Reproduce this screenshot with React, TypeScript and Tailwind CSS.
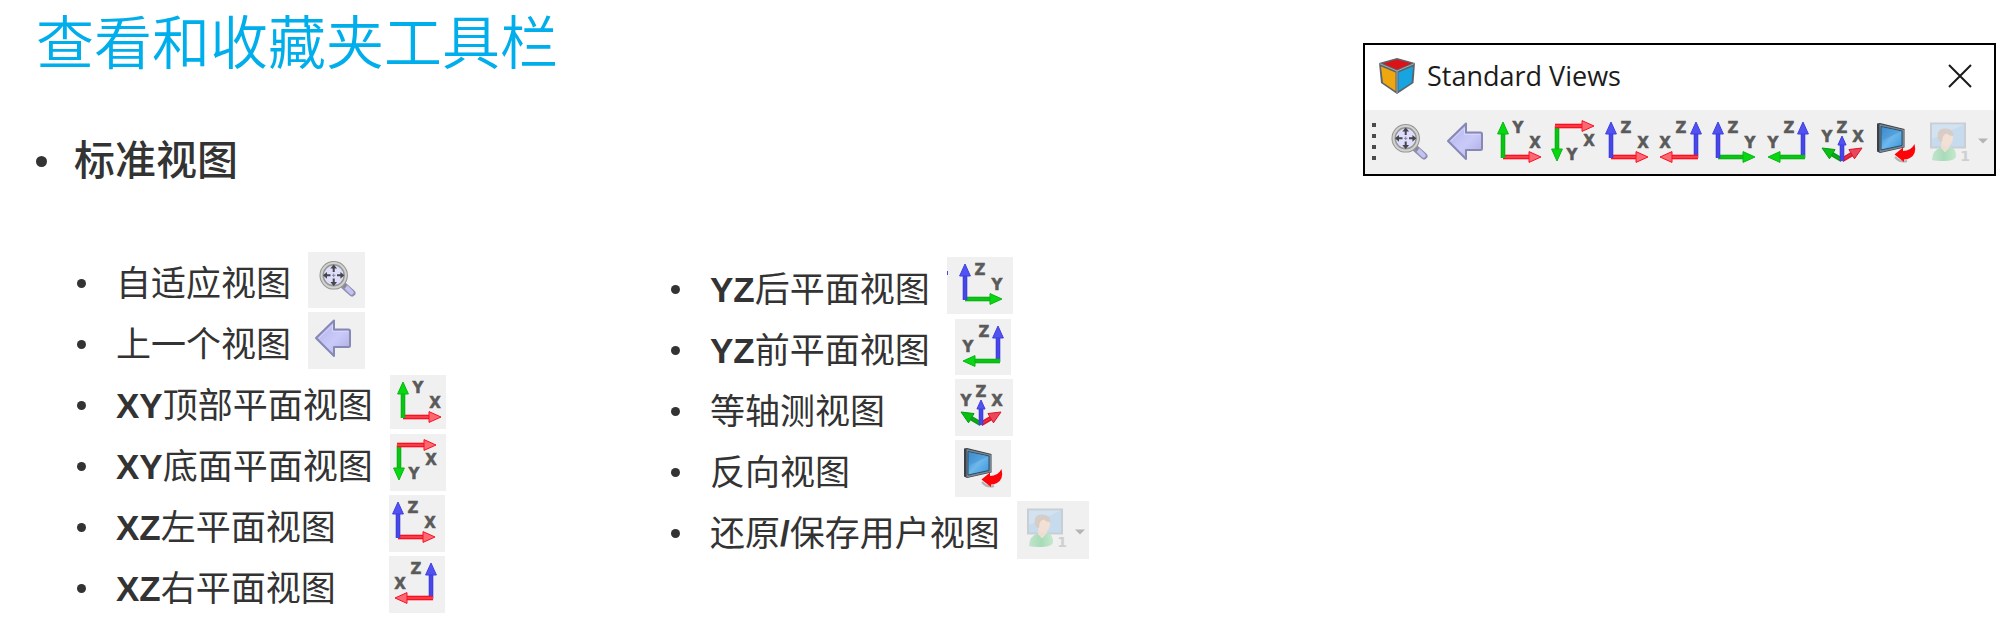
import type { ReactNode } from "react";

const RED = "#fb1020";
const RED_TIP = "#fb6a74";
const GREEN = "#0ab515";
const GREEN_TIP = "#08d810";
const BLUE = "#3f3fe0";
const BLUE_TIP = "#5252f0";

type ArrowProps = { x1: number; y1: number; x2: number; y2: number; color: string; tip: string; head?: number };

function Arrow({ x1, y1, x2, y2, color, tip, head = 12 }: ArrowProps) {
  const length = Math.hypot(x2 - x1, y2 - y1);
  const ux = (x2 - x1) / length;
  const uy = (y2 - y1) / length;
  const bx = x2 - ux * head;
  const by = y2 - uy * head;
  const half = head * 0.45;
  return (
    <g>
      <line x1={x1} y1={y1} x2={bx + ux} y2={by + uy} stroke={color} strokeWidth={4.6} />
      <line x1={x1} y1={y1} x2={bx} y2={by} stroke={tip} strokeWidth={1.4} opacity={0.7} />
      <polygon
        points={`${x2},${y2} ${bx - uy * half},${by + ux * half} ${bx + uy * half},${by - ux * half}`}
        fill={tip}
        stroke={color}
        strokeWidth={1}
        strokeLinejoin="round"
      />
    </g>
  );
}

function Letter({ x, y, children }: { x: number; y: number; children: string }) {
  return (
    <text
      x={x}
      y={y}
      textAnchor="middle"
      fontFamily="DejaVu Sans, sans-serif"
      fontWeight={700}
      fontSize={15}
      fill="#5a5a5a"
      stroke="#5a5a5a"
      strokeWidth={0.5}
    >
      {children}
    </text>
  );
}

function Icon({ children }: { children: ReactNode }) {
  return (
    <svg viewBox="0 0 44 44" className="size-11 shrink-0 overflow-visible" aria-hidden="true">
      {children}
    </svg>
  );
}

function FitIcon() {
  return (
    <Icon>
      <line x1="25" y1="29" x2="34" y2="37" stroke="#8f8fb0" strokeWidth="7" strokeLinecap="round" />
      <line x1="29" y1="32" x2="33.5" y2="36.500" stroke="#c3c3f2" strokeWidth="4.500" strokeLinecap="round" />
      <line x1="24" y1="27.500" x2="28" y2="31" stroke="#8a8a8a" strokeWidth="3" />
      <circle cx="15.700" cy="19.300" r="12" fill="#dedefb" stroke="#969696" strokeWidth="4.500" />
      <circle cx="15.700" cy="19.300" r="12.200" fill="none" stroke="#d2d2d0" strokeWidth="2" />
      <path d="M15.700 10v6M15.700 22.500v6M6.500 19.300h6M19 19.300h6" stroke="#45454d" strokeWidth="2" />
      <path
        d="M15.700 8.500l-3.400 4h6.800zM15.700 30l-3.400-4h6.800zM5 19.300l4-3.400v6.800zM26.400 19.300l-4-3.400v6.800z"
        fill="#45454d"
      />
      <path d="M14 19.300h3.400M15.700 17.600v3.400" stroke="#8585a0" strokeWidth="1" />
    </Icon>
  );
}

function BackIcon() {
  return (
    <Icon>
      <defs>
        <linearGradient id="backFill" x1="0" y1="0" x2="1" y2="1">
          <stop offset="0" stopColor="#b0b0e6" />
          <stop offset="0.550" stopColor="#cacafa" />
          <stop offset="1" stopColor="#a9a9df" />
        </linearGradient>
      </defs>
      <path
        d="M4 22L22 4.500V13.500H36.500Q38 13.500 38 15V29.500Q38 31 36.500 31H22V40Z"
        fill="url(#backFill)"
        stroke="#8888b5"
        strokeWidth="2"
        strokeLinejoin="round"
      />
      <path d="M7 22L20.500 9V15.500H36" fill="none" stroke="#d6d6fb" strokeWidth="1" />
    </Icon>
  );
}

function XyTopIcon() {
  return (
    <Icon>
      <Arrow x1={5} y1={38} x2={43} y2={38} color={RED} tip={RED_TIP} />
      <Arrow x1={5} y1={39} x2={5} y2={3} color={GREEN} tip={GREEN_TIP} />
      <Letter x={20} y={14}>Y</Letter>
      <Letter x={37} y={29}>X</Letter>
    </Icon>
  );
}

function XyBottomIcon() {
  return (
    <Icon>
      <Arrow x1={5} y1={7} x2={5} y2={42} color={GREEN} tip={GREEN_TIP} />
      <Arrow x1={3} y1={7} x2={42} y2={7} color={RED} tip={RED_TIP} />
      <Letter x={37} y={27}>X</Letter>
      <Letter x={20} y={41}>Y</Letter>
    </Icon>
  );
}

function XzLeftIcon() {
  return (
    <Icon>
      <Arrow x1={5} y1={38} x2={42} y2={38} color={RED} tip={RED_TIP} />
      <Arrow x1={5} y1={39} x2={5} y2={3} color={BLUE} tip={BLUE_TIP} />
      <Letter x={20} y={14}>Z</Letter>
      <Letter x={37} y={29}>X</Letter>
    </Icon>
  );
}

function XzRightIcon() {
  return (
    <Icon>
      <Arrow x1={36} y1={39} x2={36} y2={3} color={BLUE} tip={BLUE_TIP} />
      <Arrow x1={38} y1={38} x2={0} y2={38} color={RED} tip={RED_TIP} />
      <Letter x={21} y={14}>Z</Letter>
      <Letter x={5} y={29}>X</Letter>
    </Icon>
  );
}

function YzBackIcon() {
  return (
    <Icon>
      <Arrow x1={4} y1={38} x2={41} y2={38} color={GREEN} tip={GREEN_TIP} />
      <Arrow x1={4} y1={39} x2={4} y2={3} color={BLUE} tip={BLUE_TIP} />
      <Letter x={19} y={14}>Z</Letter>
      <Letter x={36} y={29}>Y</Letter>
    </Icon>
  );
}

function YzFrontIcon() {
  return (
    <Icon>
      <Arrow x1={35} y1={39} x2={35} y2={3} color={BLUE} tip={BLUE_TIP} />
      <Arrow x1={37} y1={38} x2={0} y2={38} color={GREEN} tip={GREEN_TIP} />
      <Letter x={21} y={14}>Z</Letter>
      <Letter x={5} y={29}>Y</Letter>
    </Icon>
  );
}

function IsoIcon() {
  return (
    <Icon>
      <Arrow x1={20} y1={41} x2={0} y2={29} color="#0b9a18" tip="#06c012" />
      <Arrow x1={20} y1={41} x2={40} y2={29} color="#e0152b" tip="#e8485a" />
      <Arrow x1={20} y1={42} x2={20} y2={17} color={BLUE} tip={BLUE_TIP} head={9} />
      <Letter x={20} y={14}>Z</Letter>
      <Letter x={5} y={23}>Y</Letter>
      <Letter x={36} y={23}>X</Letter>
    </Icon>
  );
}

function ReverseIcon() {
  return (
    <Icon>
      <defs>
        <linearGradient id="screenFill" x1="0" y1="0" x2="1" y2="1">
          <stop offset="0" stopColor="#2c7fc4" />
          <stop offset="0.500" stopColor="#6db8ec" />
          <stop offset="1" stopColor="#3d93d8" />
        </linearGradient>
      </defs>
      <path d="M1 4.500L4 4L28.500 10V28.500L4 34L1 32.500Z" fill="#3a4048" />
      <path d="M3.500 5L28 10.800V28L3.500 33.500Z" fill="#7c858d" />
      <path d="M5 7.500L26 12V26.500L5 31Z" fill="url(#screenFill)" stroke="#24506f" strokeWidth="1" />
      <path d="M5.500 8L25.500 12.300L7 21Z" fill="#4794d2" opacity="0.600" />
      <path d="M19 38Q24 44 31 42" fill="none" stroke="#777" strokeWidth="2" opacity="0.500" />
      <path
        d="M18.500 35.500L27 28.500V32Q35 32 38.500 25Q41 35 34 39Q31 40.500 28 40.500V43Z"
        fill="#fb0508"
      />
    </Icon>
  );
}

function UserViewIcon() {
  return (
    <Icon>
      <defs>
        <linearGradient id="userBody" x1="0" y1="0" x2="1" y2="0">
          <stop offset="0" stopColor="#c3e3cd" />
          <stop offset="0.500" stopColor="#a8dbb8" />
          <stop offset="1" stopColor="#c6e8cf" />
        </linearGradient>
      </defs>
      <rect x="1" y="4.500" width="34" height="24" fill="#c6dbed" stroke="#c9cdd4" strokeWidth="2" />
      <path d="M2 5.500H34L2 20Z" fill="#d3e2f0" />
      <path d="M2 41Q2 31 11 28.500L15 33L20 27.500Q27 30 26 38Q24 42 14 42Q6 42 2 41Z" fill="url(#userBody)" />
      <path d="M11 25V29L15 33L20 28V23Z" fill="#f0ddd2" />
      <ellipse cx="16.500" cy="19" rx="6.500" ry="8.500" fill="#f2e0d5" />
      <path d="M8 20Q6 9 15.500 9.500Q23 9.500 23.500 17Q19 17 17 14.500Q12 15 12 23Q9 23 8 20Z" fill="#d8ccc6" />
      <text x="35" y="42" textAnchor="middle" fontFamily="DejaVu Sans, sans-serif" fontWeight={700} fontSize={14} fill="#cfcfcf">
        1
      </text>
    </Icon>
  );
}

function DropMark() {
  return (
    <svg viewBox="0 0 10 6" className="h-1.5 w-2.5 shrink-0" aria-hidden="true">
      <path d="M0 0.500H10L5 5.500Z" fill="#b4b4b4" />
    </svg>
  );
}

function CubeIcon() {
  return (
    <svg viewBox="0 0 38 38" className="size-[38px] shrink-0" aria-hidden="true">
      <path d="M19 1L37 6L35.500 26L19 37L3 26L1 6Z" fill="#5b646b" />
      <path d="M19 2.500L33.500 6.500L19 12.500L5 6.500Z" fill="#dc1219" />
      <path d="M3 9.500L17.500 15.500V34L5 25.500Z" fill="#efa710" />
      <path d="M35 9.500L20.500 15.500V34L33.500 25.500Z" fill="#17a5e2" />
      <path d="M1.500 6.500L19 14L36.500 6.500M19 14V36" fill="none" stroke="#a6adb0" strokeWidth="1" />
    </svg>
  );
}

const tools: { name: string; icon: ReactNode }[] = [
  { name: "自适应视图", icon: <FitIcon /> },
  { name: "上一个视图", icon: <BackIcon /> },
  { name: "XY顶部平面视图", icon: <XyTopIcon /> },
  { name: "XY底面平面视图", icon: <XyBottomIcon /> },
  { name: "XZ左平面视图", icon: <XzLeftIcon /> },
  { name: "XZ右平面视图", icon: <XzRightIcon /> },
  { name: "YZ后平面视图", icon: <YzBackIcon /> },
  { name: "YZ前平面视图", icon: <YzFrontIcon /> },
  { name: "等轴测视图", icon: <IsoIcon /> },
  { name: "反向视图", icon: <ReverseIcon /> },
];

type Row = { latin?: string; label: ReactNode; labelWidth?: string; tile: string; icon: ReactNode };

const leftRows: Row[] = [
  { label: "自适应视图", tile: "w-[57px] h-[56px] pl-2.5", icon: <FitIcon /> },
  { label: "上一个视图", tile: "w-[57px] h-[57px] pl-1", icon: <BackIcon /> },
  { latin: "XY", label: "顶部平面视图", tile: "w-[56px] h-[54px] pl-2", icon: <XyTopIcon /> },
  { latin: "XY", label: "底面平面视图", tile: "w-[56px] h-[57px] pl-1", icon: <XyBottomIcon /> },
  { latin: "XZ", label: "左平面视图", labelWidth: "min-w-[256px]", tile: "w-[56px] h-[57px] pl-1", icon: <XzLeftIcon /> },
  { latin: "XZ", label: "右平面视图", labelWidth: "min-w-[256px]", tile: "w-[56px] h-[57px] pl-1.5", icon: <XzRightIcon /> },
];

const rightRows: Row[] = [
  {
    latin: "YZ",
    label: "后平面视图",
    tile: "w-[66px] h-[57px] pl-3.5",
    icon: (
      <>
        <span className="absolute left-0 top-3.5 h-1 w-px bg-[#4a4ae0]" />
        <YzBackIcon />
      </>
    ),
  },
  { latin: "YZ", label: "前平面视图", labelWidth: "min-w-[228px]", tile: "w-[56px] h-[56px] pl-2", icon: <YzFrontIcon /> },
  { label: "等轴测视图", labelWidth: "min-w-[228px]", tile: "w-[58px] h-[57px] pl-1.5", icon: <IsoIcon /> },
  { label: "反向视图", labelWidth: "min-w-[228px]", tile: "w-[56px] h-[57px] pl-2", icon: <ReverseIcon /> },
  {
    label: (
      <>
        还原<b>/</b>保存用户视图
      </>
    ),
    tile: "w-[72px] h-[58px] pl-2.5",
    icon: (
      <>
        <UserViewIcon />
        <span className="mt-6 ml-1">
          <DropMark />
        </span>
      </>
    ),
  },
];

function ViewList({ rows }: { rows: Row[] }) {
  return (
    <ul>
      {rows.map((row, index) => (
        <li key={index} className="flex h-[61px] items-center">
          <span className="mr-[30px] size-[9px] shrink-0 rounded-full bg-[#333333]" />
          <span className={`mr-[17px] whitespace-nowrap text-[35px] leading-[61px] ${row.labelWidth ?? ""}`}>
            {row.latin && <b>{row.latin}</b>}
            {row.label}
          </span>
          <span className={`relative mb-2 flex shrink-0 items-start bg-[#f0f0f0] pt-1 ${row.tile}`}>{row.icon}</span>
        </li>
      ))}
    </ul>
  );
}

function StandardViews() {
  return (
    <section aria-label="Standard Views" className="mt-[43px] mr-[14px] w-[633px] shrink-0 self-start border-2 border-black bg-white">
      <div className="flex h-[65px] items-center pr-[18px] pb-1 pl-[13px]">
        <CubeIcon />
        <h3 className="ml-[11px] flex-1 font-['Open_Sans','Noto_Sans',sans-serif] text-[27px] leading-8 text-[#1c1c1c]">
          Standard Views
        </h3>
        <button type="button" aria-label="Close" className="flex size-8 items-center justify-center">
          <svg viewBox="0 0 24 24" className="size-6" aria-hidden="true">
            <path d="M1 1L23 23M23 1L1 23" stroke="#1a1a1a" strokeWidth="2" />
          </svg>
        </button>
      </div>
      <div className="flex h-16 items-center bg-[#f0f0f0] pb-0.5 pl-[7px]">
        <span className="mr-[14px] flex flex-col gap-[7px]">
          <span className="size-1 bg-[#4a4a4a]" />
          <span className="size-1 bg-[#4a4a4a]" />
          <span className="size-1 bg-[#4a4a4a]" />
          <span className="size-1 bg-[#4a4a4a]" />
        </span>
        <div className="flex gap-2.5">
          {tools.map((tool) => (
            <button key={tool.name} type="button" aria-label={tool.name}>
              {tool.icon}
            </button>
          ))}
          <button type="button" disabled aria-label="还原/保存用户视图" className="flex items-center gap-1">
            <UserViewIcon />
            <DropMark />
          </button>
        </div>
      </div>
    </section>
  );
}

export default function App() {
  return (
    <main className="min-h-screen bg-white font-['Liberation_Sans','Noto_Sans_CJK_SC',sans-serif] text-[#333333]">
      <header className="flex justify-between">
        <div className="pl-9">
          <h1 className="whitespace-nowrap text-[58px] leading-[88px] font-[350] text-[#00aeeb]">查看和收藏夹工具栏</h1>
          <div className="mt-11 flex items-center">
            <span className="mr-[27px] size-[11px] rounded-full bg-[#333333]" />
            <h2 className="text-[41px] leading-[58px] font-medium">标准视图</h2>
          </div>
        </div>
        <StandardViews />
      </header>
      <div className="grid grid-cols-[594px_auto] pt-[63px] pl-[77px]">
        <ViewList rows={leftRows} />
        <div className="pt-[6px]">
          <ViewList rows={rightRows} />
        </div>
      </div>
    </main>
  );
}
